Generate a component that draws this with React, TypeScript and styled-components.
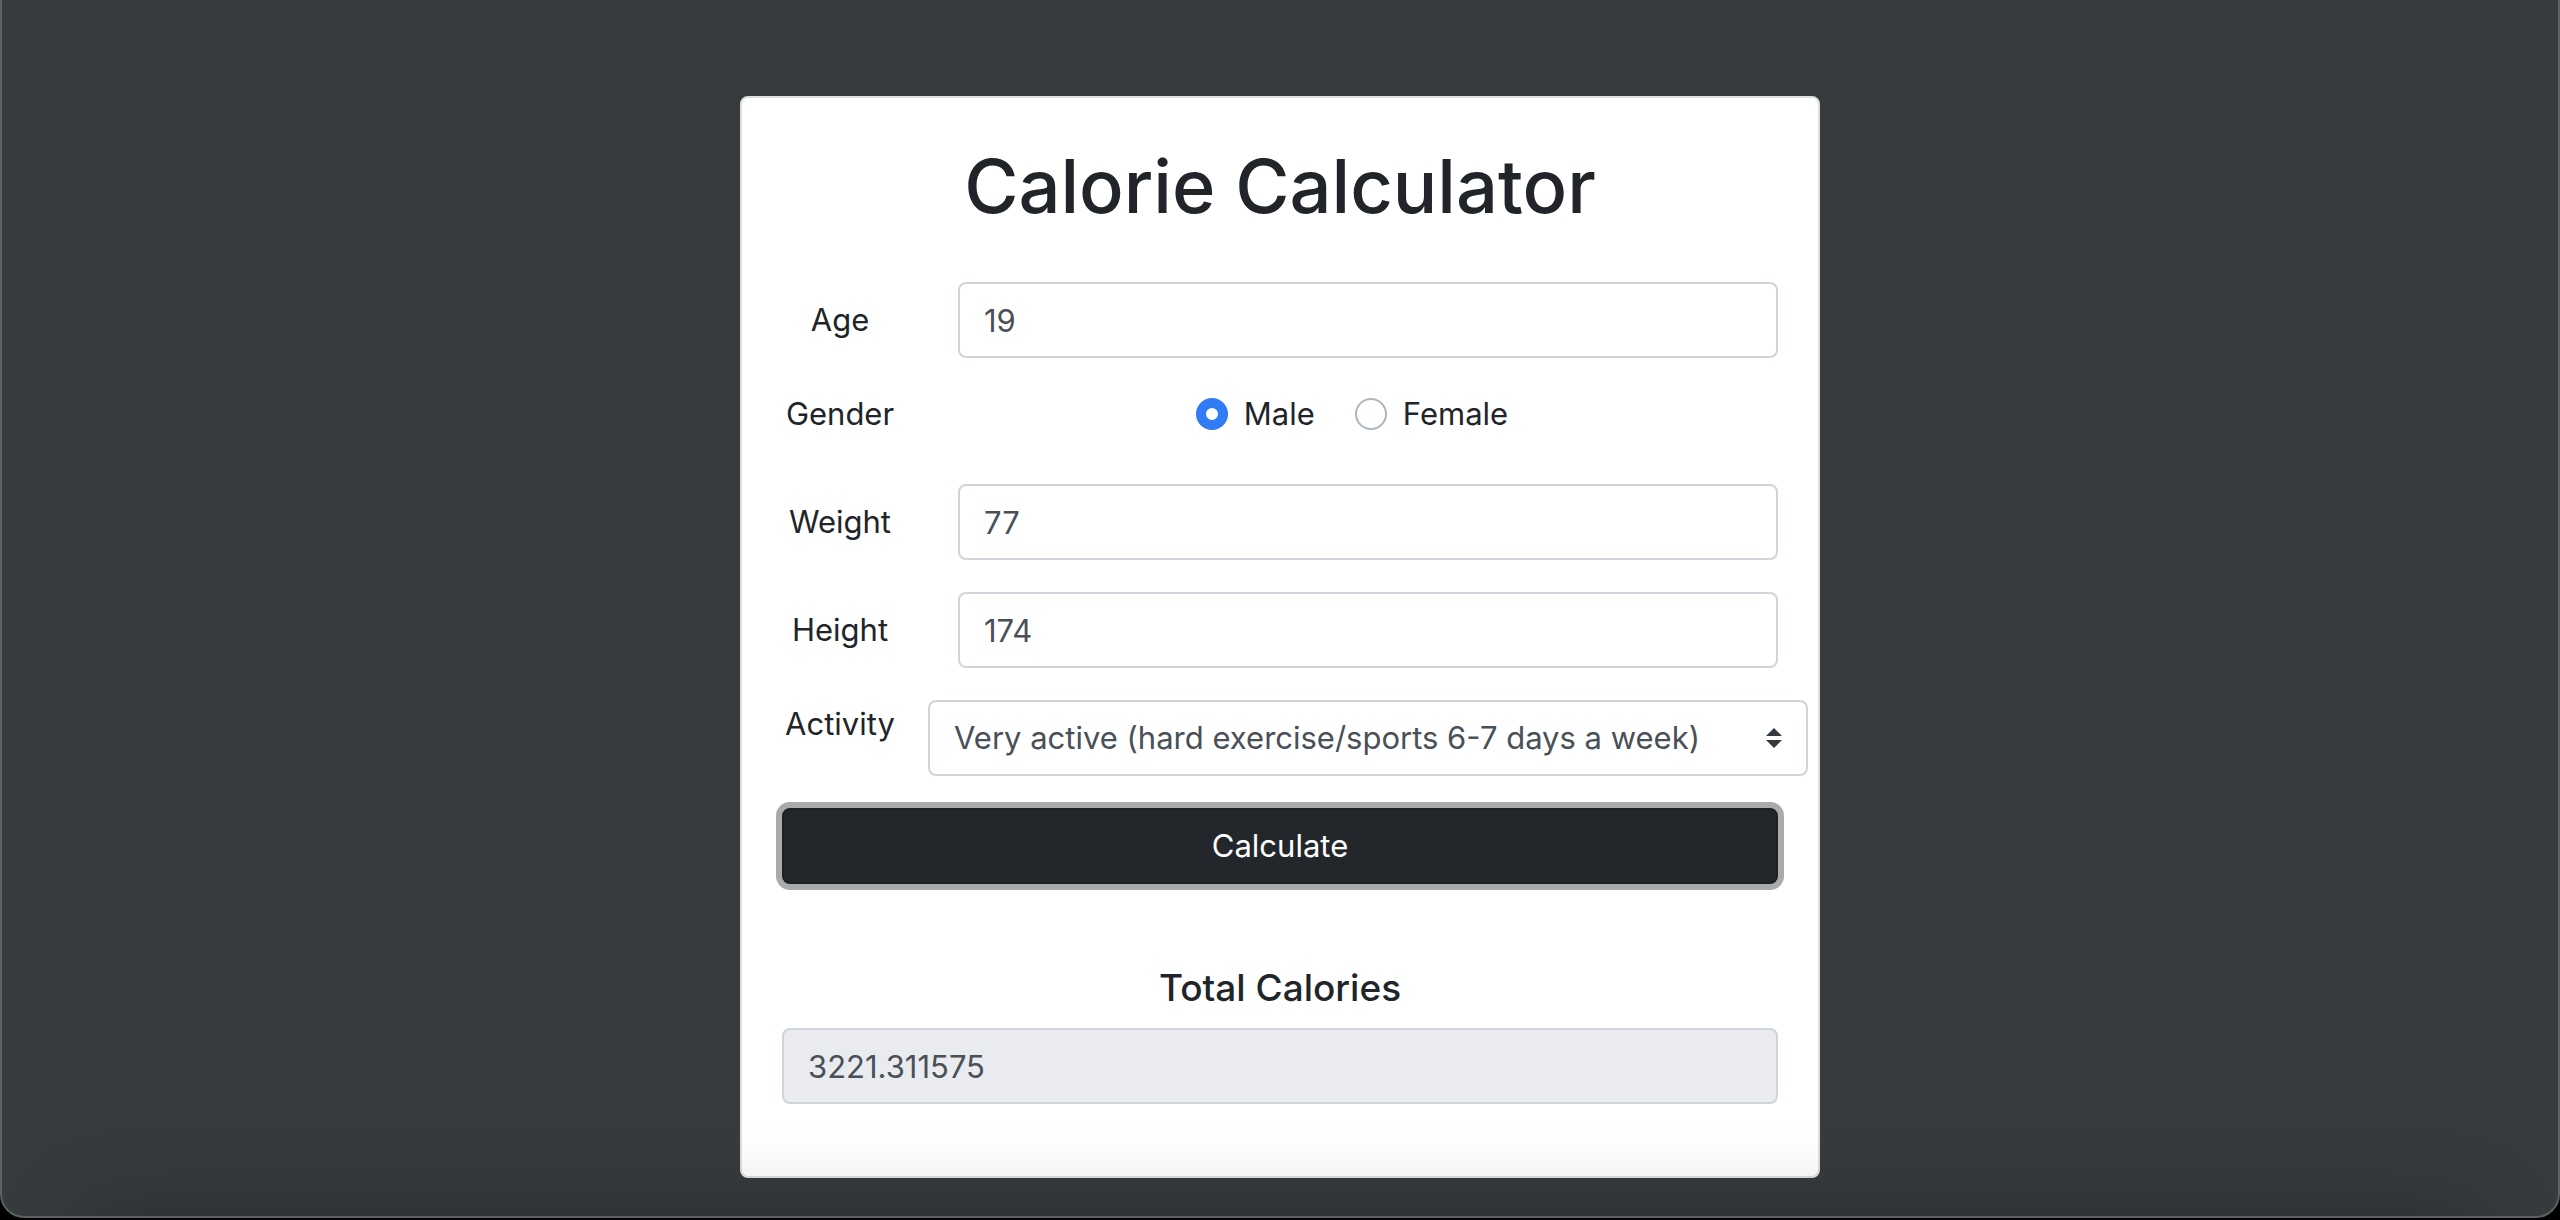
import React, { useState } from "react";
import styled, { createGlobalStyle } from "styled-components";

const GlobalStyle = createGlobalStyle`
  *, *::before, *::after { box-sizing: border-box; }
  body {
    margin: 0;
    background: #000;
    color: #212529;
    font-family: Inter, "Liberation Sans", sans-serif;
    font-size: 31px;
    line-height: 48px;
  }
`;

const Window = styled.main`
  position: relative;
  display: flex;
  justify-content: center;
  align-items: flex-start;
  min-height: calc(100vh - 2px);
  padding: 96px 24px 38px;
  overflow: hidden;
  background: #363b3e;
  border: 2px solid #5b6063;
  border-top: 0;
  border-radius: 0 0 24px 24px;
`;

/* Soft shade rising from the bottom edge of the window */
const BottomShade = styled.div`
  position: absolute;
  left: 80px;
  right: 80px;
  top: 100%;
  height: 120px;
  pointer-events: none;
  box-shadow: 0 0 88px rgba(0, 0, 0, 0.26);
`;

const Card = styled.section`
  width: 100%;
  max-width: 1080px;
  padding: 40px;
  background: #fff;
  border: 2px solid #dfdfdf;
  border-radius: 8px;
  text-align: center;
`;

const Title = styled.h1`
  margin: 0 0 48px;
  font-size: 74px;
  line-height: 96px;
  font-weight: 500;
`;

const Form = styled.form`
  display: flex;
  flex-direction: column;
  gap: 32px;
`;

const Row = styled.div<{ $top?: boolean }>`
  display: grid;
  grid-template-columns: minmax(0, 1fr) minmax(0, 5fr);
  align-items: ${(p) => (p.$top ? "start" : "center")};
  margin: 0 -30px;
`;

const Label = styled.label``;

const Cell = styled.div`
  padding: 0 30px;
`;

const TextInput = styled.input`
  display: block;
  width: 100%;
  height: 76px;
  padding: 12px 24px;
  font: inherit;
  color: #495057;
  background: #fff;
  border: 2px solid #ced4da;
  border-radius: 8px;

  &:read-only {
    background: #eaebef;
  }
`;

const RadioGroup = styled.div`
  display: flex;
  justify-content: center;
  gap: 40px;
  padding: 0 62px 14px 30px;
`;

const RadioLabel = styled.label`
  display: flex;
  align-items: center;
  gap: 16px;
`;

const Radio = styled.input`
  appearance: none;
  width: 32px;
  height: 32px;
  margin: 0;
  background: #fff;
  border: 2px solid #adb5bd;
  border-radius: 50%;

  &:checked {
    border: 10px solid #307cf6;
  }
`;

const SelectBox = styled.div`
  display: grid;
  align-items: center;

  > * {
    grid-area: 1 / 1;
  }
`;

const Select = styled.select`
  appearance: none;
  width: 100%;
  height: 76px;
  padding: 12px 56px 12px 24px;
  font: inherit;
  color: #495057;
  background: #fff;
  border: 2px solid #ced4da;
  border-radius: 8px;
`;

const Arrows = styled.svg`
  justify-self: end;
  width: 16px;
  height: 20px;
  margin-right: 26px;
  fill: #343a40;
  pointer-events: none;
`;

const Button = styled.button`
  height: 76px;
  font: inherit;
  color: #fff;
  background: #23272b;
  border: 2px solid #1d2124;
  border-radius: 8px;
  outline: none;
  box-shadow: 0 0 0 6px #a9aaac;
  cursor: pointer;
`;

const Result = styled.div`
  margin: 48px 0 32px;
`;

const ResultLabel = styled.label`
  display: block;
  margin-bottom: 16px;
  font-size: 37px;
  font-weight: 500;
`;

const ACTIVITIES = [
  { factor: 1.2, text: "Sedentary (little or no exercise)" },
  { factor: 1.375, text: "Lightly active (light exercise/sports 1-3 days a week)" },
  { factor: 1.55, text: "Moderately active (moderate exercise/sports 3-5 days a week)" },
  { factor: 1.725, text: "Very active (hard exercise/sports 6-7 days a week)" },
];

type Gender = "male" | "female";

function totalCalories(age: number, gender: Gender, weight: number, height: number, factor: number) {
  const base =
    gender === "male"
      ? 66.5 + 13.75 * weight + 5.003 * height - 6.755 * age
      : 655.1 + 9.563 * weight + 1.85 * height - 4.676 * age;
  return Math.round(base * factor * 1e6) / 1e6;
}

export default function App() {
  const [age, setAge] = useState("19");
  const [gender, setGender] = useState<Gender>("male");
  const [weight, setWeight] = useState("77");
  const [height, setHeight] = useState("174");
  const [factor, setFactor] = useState(1.725);
  const [total, setTotal] = useState(() => totalCalories(19, "male", 77, 174, 1.725));

  const submit = (e: React.FormEvent) => {
    e.preventDefault();
    setTotal(totalCalories(Number(age), gender, Number(weight), Number(height), factor));
  };

  const field = (id: string, text: string, value: string, set: (v: string) => void) => (
    <Row>
      <Label htmlFor={id}>{text}</Label>
      <Cell>
        <TextInput id={id} inputMode="numeric" value={value} onChange={(e) => set(e.target.value)} />
      </Cell>
    </Row>
  );

  return (
    <>
      <GlobalStyle />
      <Window>
        <Card>
          <Title>Calorie Calculator</Title>
          <Form onSubmit={submit}>
            {field("age", "Age", age, setAge)}
            <Row $top role="radiogroup" aria-labelledby="gender-label">
              <span id="gender-label">Gender</span>
              <RadioGroup>
                <RadioLabel>
                  <Radio type="radio" name="gender" checked={gender === "male"} onChange={() => setGender("male")} />
                  Male
                </RadioLabel>
                <RadioLabel>
                  <Radio type="radio" name="gender" checked={gender === "female"} onChange={() => setGender("female")} />
                  Female
                </RadioLabel>
              </RadioGroup>
            </Row>
            {field("weight", "Weight", weight, setWeight)}
            {field("height", "Height", height, setHeight)}
            <Row $top>
              <Label htmlFor="activity">Activity</Label>
              <SelectBox>
                <Select id="activity" value={factor} onChange={(e) => setFactor(Number(e.target.value))}>
                  {ACTIVITIES.map((a) => (
                    <option key={a.factor} value={a.factor}>
                      {a.text}
                    </option>
                  ))}
                </Select>
                <Arrows viewBox="0 0 4 5" aria-hidden="true">
                  <path d="M2 0L0 2h4zm0 5L0 3h4z" />
                </Arrows>
              </SelectBox>
            </Row>
            <Button type="submit">Calculate</Button>
            <Result>
              <ResultLabel htmlFor="total">Total Calories</ResultLabel>
              <TextInput id="total" readOnly value={String(total)} />
            </Result>
          </Form>
        </Card>
        <BottomShade />
      </Window>
    </>
  );
}
